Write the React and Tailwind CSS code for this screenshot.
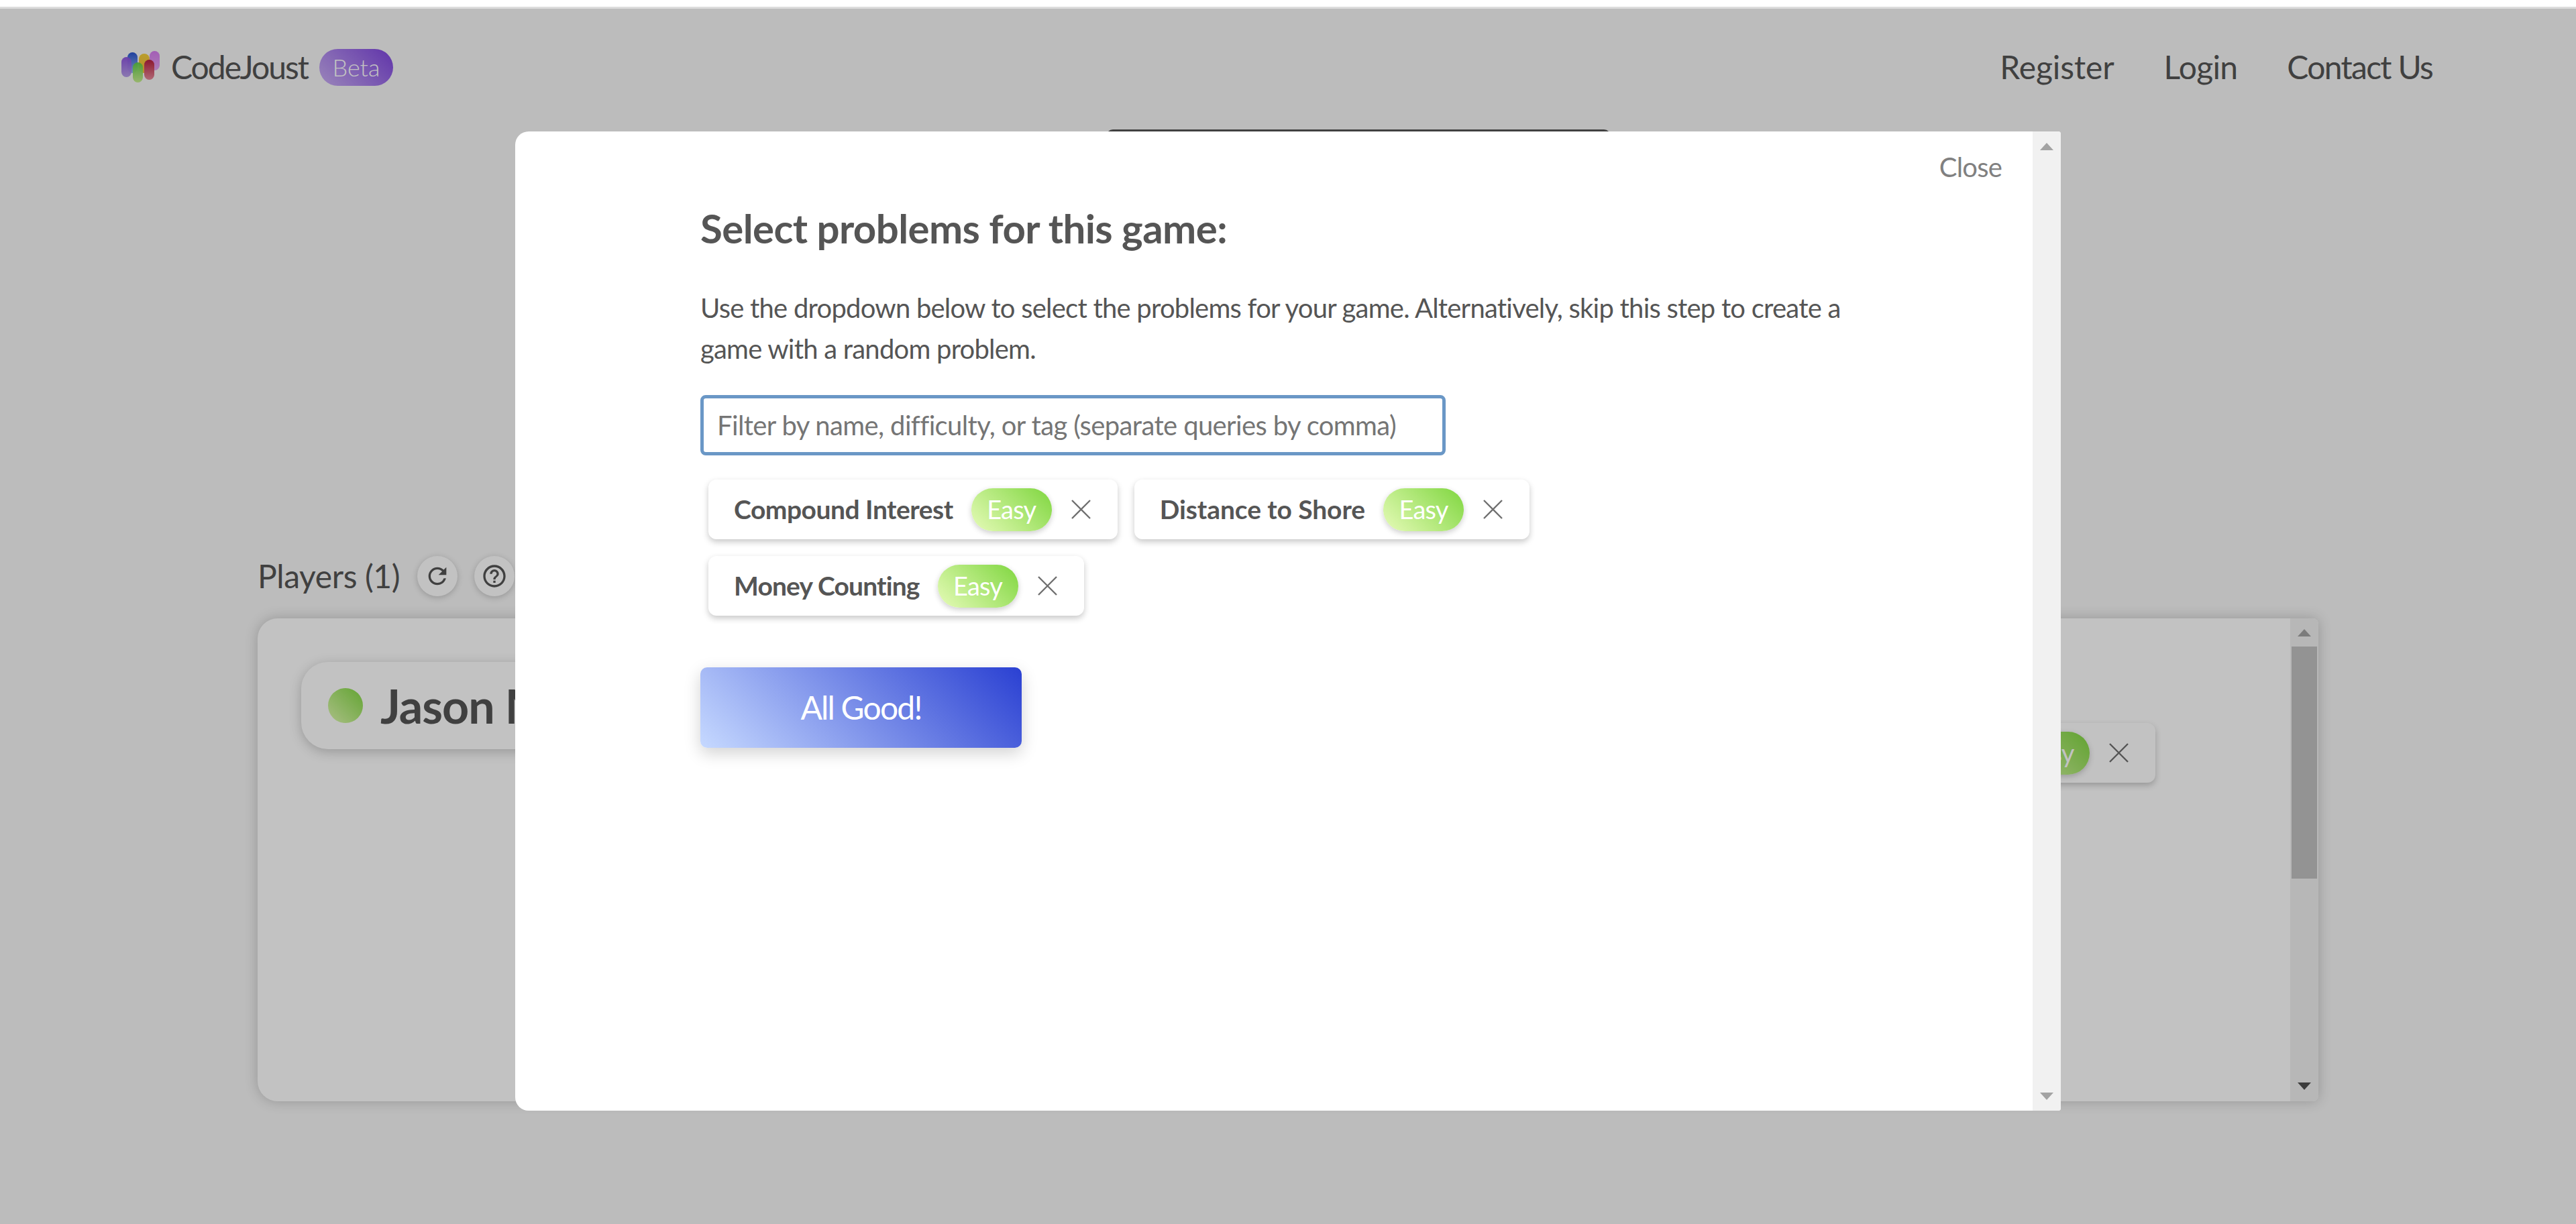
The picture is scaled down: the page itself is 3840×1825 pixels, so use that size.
import React from 'react';
import { MdRefresh, MdHelpOutline } from 'react-icons/md';

const Logo = () => (
  <svg width="60" height="48" viewBox="0 0 60 48" className="shrink-0">
    <defs>
      <linearGradient id="lgPink" x1="0" y1="0" x2="0" y2="1"><stop offset="0" stopColor="#d77cf0" /><stop offset="1" stopColor="#e3a5f0" /></linearGradient>
      <linearGradient id="lgYellow" x1="0" y1="0" x2="0" y2="1"><stop offset="0" stopColor="#f5d03a" /><stop offset="1" stopColor="#f0b83a" /></linearGradient>
      <linearGradient id="lgRed" x1="0" y1="0" x2="0" y2="1"><stop offset="0" stopColor="#b8203f" /><stop offset="1" stopColor="#e88a9a" /></linearGradient>
      <linearGradient id="lgBlue" x1="0" y1="0" x2="0" y2="1"><stop offset="0" stopColor="#2a55d0" /><stop offset="1" stopColor="#9ab8f0" /></linearGradient>
      <linearGradient id="lgPurple" x1="0" y1="0" x2="0" y2="1"><stop offset="0" stopColor="#8a4fe0" /><stop offset="1" stopColor="#b39ae8" /></linearGradient>
      <linearGradient id="lgGreen" x1="0" y1="0" x2="0" y2="1"><stop offset="0" stopColor="#5fcf45" /><stop offset="1" stopColor="#c5ee8a" /></linearGradient>
    </defs>
    <rect x="45" y="0" width="15" height="29" rx="7.5" fill="url(#lgPink)" />
    <rect x="29" y="4" width="16" height="29" rx="8" fill="url(#lgYellow)" />
    <rect x="37" y="13" width="15" height="30" rx="7.5" fill="url(#lgRed)" />
    <rect x="12" y="2" width="15" height="31" rx="7.5" fill="url(#lgBlue)" />
    <rect x="3" y="9" width="15" height="30" rx="7.5" fill="url(#lgPurple)" fillOpacity="0.95" />
    <rect x="20" y="17" width="15" height="30" rx="7.5" fill="url(#lgGreen)" fillOpacity="0.95" />
  </svg>
);

const Triangle = ({ down, className }) => (
  <svg width="20" height="11" viewBox="0 0 20 11" className={className}>
    <path d={down ? 'M0 0H20L10 11Z' : 'M10 0L20 11H0Z'} fill="currentColor" />
  </svg>
);

const CloseX = () => (
  <svg width="29" height="29" viewBox="0 0 29 29" className="shrink-0 text-[#6f6f6f]">
    <path d="M1 1L28 28M28 1L1 28" stroke="currentColor" strokeWidth="2.4" />
  </svg>
);

const Chip = ({ name, labelClass }) => (
  <div className="flex h-[89px] items-center rounded-[12px] bg-white pl-[38px] pr-[40px] shadow-[0_4px_10px_rgba(0,0,0,0.22)]">
    <span className={`whitespace-nowrap text-[39px] font-bold text-[#555] ${labelClass}`}>{name}</span>
    <span className="ml-[27px] flex h-[64px] w-[120px] items-center justify-center rounded-[32px] bg-[linear-gradient(45deg,#e6fbb8,#7fd63f)] text-[38px] tracking-[-0.8px] text-white shadow-[0_3px_8px_rgba(0,0,0,0.2)]">
      Easy
    </span>
    <span className="ml-[29px] flex"><CloseX /></span>
  </div>
);

const RoundButton = ({ children }) => (
  <span className="flex h-[60px] w-[60px] items-center justify-center rounded-full bg-white text-[#555] shadow-[0_2px_10px_rgba(0,0,0,0.2)]">
    {children}
  </span>
);

const Modal = () => (
  <div className="absolute left-[768px] top-[183px] flex h-[1460px] w-[2304px] overflow-hidden rounded-l-[20px] rounded-r-[4px] bg-white">
    <div className="flex-1">
      <div className="flex justify-end pr-[46px] pt-[23px]">
        <span className="text-[40px] leading-[60px] tracking-[-0.8px] text-[#808080]">Close</span>
      </div>
      <div className="px-[276px] pt-[26px]">
        <h1 className="text-[60px] font-bold leading-[70px] tracking-[-0.6px] text-[#555]">Select problems for this game:</h1>
        <p className="mt-[54px] text-[40px] leading-[61px] tracking-[-0.78px] text-[#555]">
          Use the dropdown below to select the problems for your game. Alternatively, skip this step to create a game with a random problem.
        </p>
        <input
          readOnly
          placeholder="Filter by name, difficulty, or tag (separate queries by comma)"
          className="mt-[38px] block h-[90px] w-[1111px] rounded-[8px] border-[5px] border-[#6a97c6] bg-white pl-[20px] text-[40px] tracking-[-0.63px] text-[#555] outline-none placeholder:text-[#757575]"
        />
        <div className="ml-[12px] mt-[36px] flex flex-wrap gap-[25px]">
          <Chip name="Compound Interest" labelClass="tracking-[-0.5px]" />
          <Chip name="Distance to Shore" labelClass="tracking-[-0.1px]" />
          <Chip name="Money Counting" labelClass="tracking-[-0.85px]" />
        </div>
        <button className="mt-[77px] flex h-[120px] w-[479px] items-center justify-center rounded-[10px] bg-[linear-gradient(45deg,#c6d9ff,#2a40d2)] text-[48px] tracking-[-1.8px] text-white shadow-[0_8px_24px_rgba(0,0,0,0.18)]">
          All Good!
        </button>
      </div>
    </div>
    <div className="flex w-[42px] flex-col items-center justify-between bg-[#f1f1f1] pb-[16px] pt-[17px] text-[#a3a3a3]">
      <Triangle />
      <Triangle down />
    </div>
  </div>
);

export default function App() {
  return (
    <div className="flex h-[1825px] w-[3840px] flex-col overflow-hidden bg-white font-['Lato',sans-serif]">
      <div className="h-[10px] shrink-0 bg-white" />
      <div className="h-[3px] shrink-0 bg-[#dcdcdc]" />

      <div className="relative flex-1 bg-[#f7f7f7]">
        <nav className="flex h-[174px] items-center justify-between pl-[178px] pr-[214px] text-[48px] text-[#555]">
          <div className="flex items-center">
            <Logo />
            <span className="ml-[17px] tracking-[-2px]">CodeJoust</span>
            <span className="ml-[17px] flex h-[55px] w-[110px] items-center justify-center rounded-[28px] bg-[linear-gradient(45deg,#cbb0f5,#7f45e0)] text-[36px] font-light text-white">
              Beta
            </span>
          </div>
          <div className="flex gap-[74px]">
            <a className="tracking-[-0.1px]">Register</a>
            <a className="tracking-[-0.7px]">Login</a>
            <a className="tracking-[-1.7px]">Contact Us</a>
          </div>
        </nav>

        <div className="mt-[6px] flex justify-center">
          <div className="ml-[210px] h-[120px] w-[752px] rounded-[10px] bg-[#555]" />
        </div>

        <div className="mt-[516px] flex h-[60px] items-center pl-[384px] text-[48px] text-[#555]">
          <span className="tracking-[-0.4px]">Players (1)</span>
          <span className="ml-[26px] flex gap-[25px]">
            <RoundButton><MdRefresh size={40} /></RoundButton>
            <RoundButton><MdHelpOutline size={40} /></RoundButton>
          </span>
        </div>

        <div className="ml-[384px] mt-[33px] flex h-[720px] w-[3072px] overflow-hidden rounded-l-[30px] rounded-r-[8px] bg-white shadow-[0_0_20px_rgba(0,0,0,0.2)]">
          <div className="flex flex-1 items-start justify-between pl-[65px] pr-[201px] pt-[65px]">
            <div className="flex h-[130px] w-[900px] items-center rounded-[40px] bg-white pl-[40px] shadow-[0_4px_18px_rgba(0,0,0,0.22)]">
              <span className="h-[52px] w-[52px] rounded-full bg-[linear-gradient(45deg,#e0fbb0,#82d843)]" />
              <span className="ml-[26px] text-[70px] font-bold leading-none tracking-[-1px] text-[#555]">Jason M</span>
            </div>
            <div className="mt-[91px]">
              <Chip name="Money Counting" labelClass="tracking-[-0.85px]" />
            </div>
          </div>
          <div className="flex w-[42px] flex-col items-center bg-[#f1f1f1] pb-[17px] pt-[16px]">
            <Triangle className="text-[#a3a3a3]" />
            <div className="mt-[15px] h-[346px] w-[38px] bg-[#c1c1c1]" />
            <div className="flex-1" />
            <Triangle down className="text-[#505050]" />
          </div>
        </div>

        <div className="absolute inset-0 bg-black/24" />
        <Modal />
      </div>
    </div>
  );
}
